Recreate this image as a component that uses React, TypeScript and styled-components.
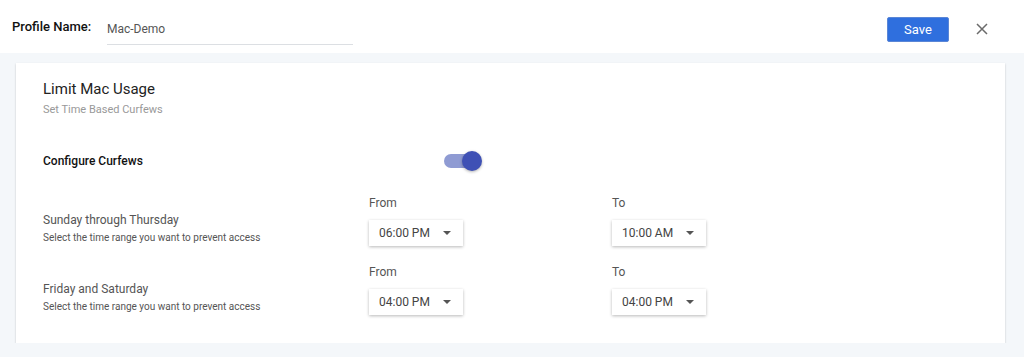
import React from 'react';
import styled, { createGlobalStyle } from 'styled-components';

const GlobalStyle = createGlobalStyle`
  body {
    margin: 0;
    background: #f4f7fa;
    font-family: Roboto, "Liberation Sans", sans-serif;
  }
`;

const Header = styled.header`
  height: 53px;
  background: #ffffff;
  display: flex;
  align-items: center;
  padding: 0 36px 0 12px;
  box-sizing: border-box;
`;

const ProfileLabel = styled.label`
  font-size: 13px;
  font-weight: 500;
  color: #111;
  width: 95px;
  margin-top: -1px;
`;

const NameInput = styled.input`
  width: 246px;
  height: 30px;
  border: none;
  border-bottom: 1px solid #dcdfe3;
  font-family: inherit;
  font-size: 12px;
  color: #555;
  padding: 0;
  margin-top: 5px;
  outline: none;
`;

const Spacer = styled.div`
  flex: 1;
`;

const SaveButton = styled.button`
  width: 62px;
  height: 25px;
  background: #2f6fde;
  color: #fff;
  border: 1px solid #5a86d6;
  border-radius: 2px;
  font-family: inherit;
  font-size: 13px;
  cursor: pointer;
  margin-top: 6px;
`;

const CloseButton = styled.button`
  background: none;
  border: none;
  padding: 0;
  margin-left: 27px;
  margin-top: 4px;
  display: flex;
  cursor: pointer;
`;

const Card = styled.section`
  margin: 10px 19px 0 16px;
  background: #fff;
  padding: 16px 27px 28px;
  box-shadow: 0 1px 2px rgba(0, 0, 0, 0.2);
`;

const Title = styled.h2`
  margin: 0;
  font-size: 15px;
  line-height: 20px;
  font-weight: 400;
  color: #222;
`;

const Subtitle = styled.p`
  margin: 4px 0 0;
  font-size: 11px;
  line-height: 14px;
  color: #999;
`;

const ConfigRow = styled.div`
  display: flex;
  align-items: center;
  height: 20px;
  margin-top: 34px;
`;

const ConfigLabel = styled.span`
  width: 401px;
  font-size: 12px;
  font-weight: 500;
  color: #111;
`;

const Toggle = styled.div`
  position: relative;
  width: 40px;
  height: 20px;
`;

const Track = styled.div`
  position: absolute;
  left: 0;
  top: 3px;
  width: 34px;
  height: 14px;
  border-radius: 7px;
  background: #8f9bd3;
`;

const Thumb = styled.div`
  position: absolute;
  left: 18px;
  top: 0;
  width: 20px;
  height: 20px;
  border-radius: 50%;
  background: #3f51b5;
  box-shadow: 0 1px 3px rgba(0, 0, 0, 0.3);
`;

const CurfewRow = styled.div<{ $first?: boolean }>`
  display: grid;
  grid-template-columns: 326px 243px 96px;
  margin-top: ${p => (p.$first ? '25px' : '19px')};
`;

const DayInfo = styled.div`
  align-self: end;
  padding-bottom: 1px;
`;

const DayName = styled.div`
  font-size: 12px;
  line-height: 16px;
  color: #555;
`;

const DayHint = styled.div`
  font-size: 10px;
  line-height: 14px;
  margin-top: 3px;
  color: #555;
`;

const Field = styled.div`
  display: flex;
  flex-direction: column;
`;

const FieldLabel = styled.span`
  font-size: 12px;
  line-height: 14px;
  color: #555;
  margin-bottom: 10px;
`;

const Select = styled.div`
  width: 94px;
  height: 26px;
  box-sizing: border-box;
  padding: 0 10px;
  display: flex;
  align-items: center;
  justify-content: space-between;
  background: #fff;
  box-shadow: 0 1px 3px rgba(0, 0, 0, 0.28);
  font-size: 12px;
  color: #444;
`;

const Caret = styled.span`
  width: 0;
  height: 0;
  border-left: 4px solid transparent;
  border-right: 4px solid transparent;
  border-top: 4px solid #555;
  margin-right: 2px;
`;

const TimeSelect = ({ value }: { value: string }) => (
  <Select>
    {value}
    <Caret />
  </Select>
);

const rows = [
  { day: 'Sunday through Thursday', from: '06:00 PM', to: '10:00 AM' },
  { day: 'Friday and Saturday', from: '04:00 PM', to: '04:00 PM' },
];

export default function App() {
  return (
    <>
      <GlobalStyle />
      <Header>
        <ProfileLabel>Profile Name:</ProfileLabel>
        <NameInput defaultValue="Mac-Demo" />
        <Spacer />
        <SaveButton>Save</SaveButton>
        <CloseButton aria-label="Close">
          <svg width="12" height="12" viewBox="0 0 12 12">
            <path d="M1 1L11 11M11 1L1 11" stroke="#6b6b6b" strokeWidth="1.5" />
          </svg>
        </CloseButton>
      </Header>
      <Card>
        <Title>Limit Mac Usage</Title>
        <Subtitle>Set Time Based Curfews</Subtitle>
        <ConfigRow>
          <ConfigLabel>Configure Curfews</ConfigLabel>
          <Toggle>
            <Track />
            <Thumb />
          </Toggle>
        </ConfigRow>
        {rows.map((r, i) => (
          <CurfewRow key={r.day} $first={i === 0}>
            <DayInfo>
              <DayName>{r.day}</DayName>
              <DayHint>Select the time range you want to prevent access</DayHint>
            </DayInfo>
            <Field>
              <FieldLabel>From</FieldLabel>
              <TimeSelect value={r.from} />
            </Field>
            <Field>
              <FieldLabel>To</FieldLabel>
              <TimeSelect value={r.to} />
            </Field>
          </CurfewRow>
        ))}
      </Card>
    </>
  );
}
